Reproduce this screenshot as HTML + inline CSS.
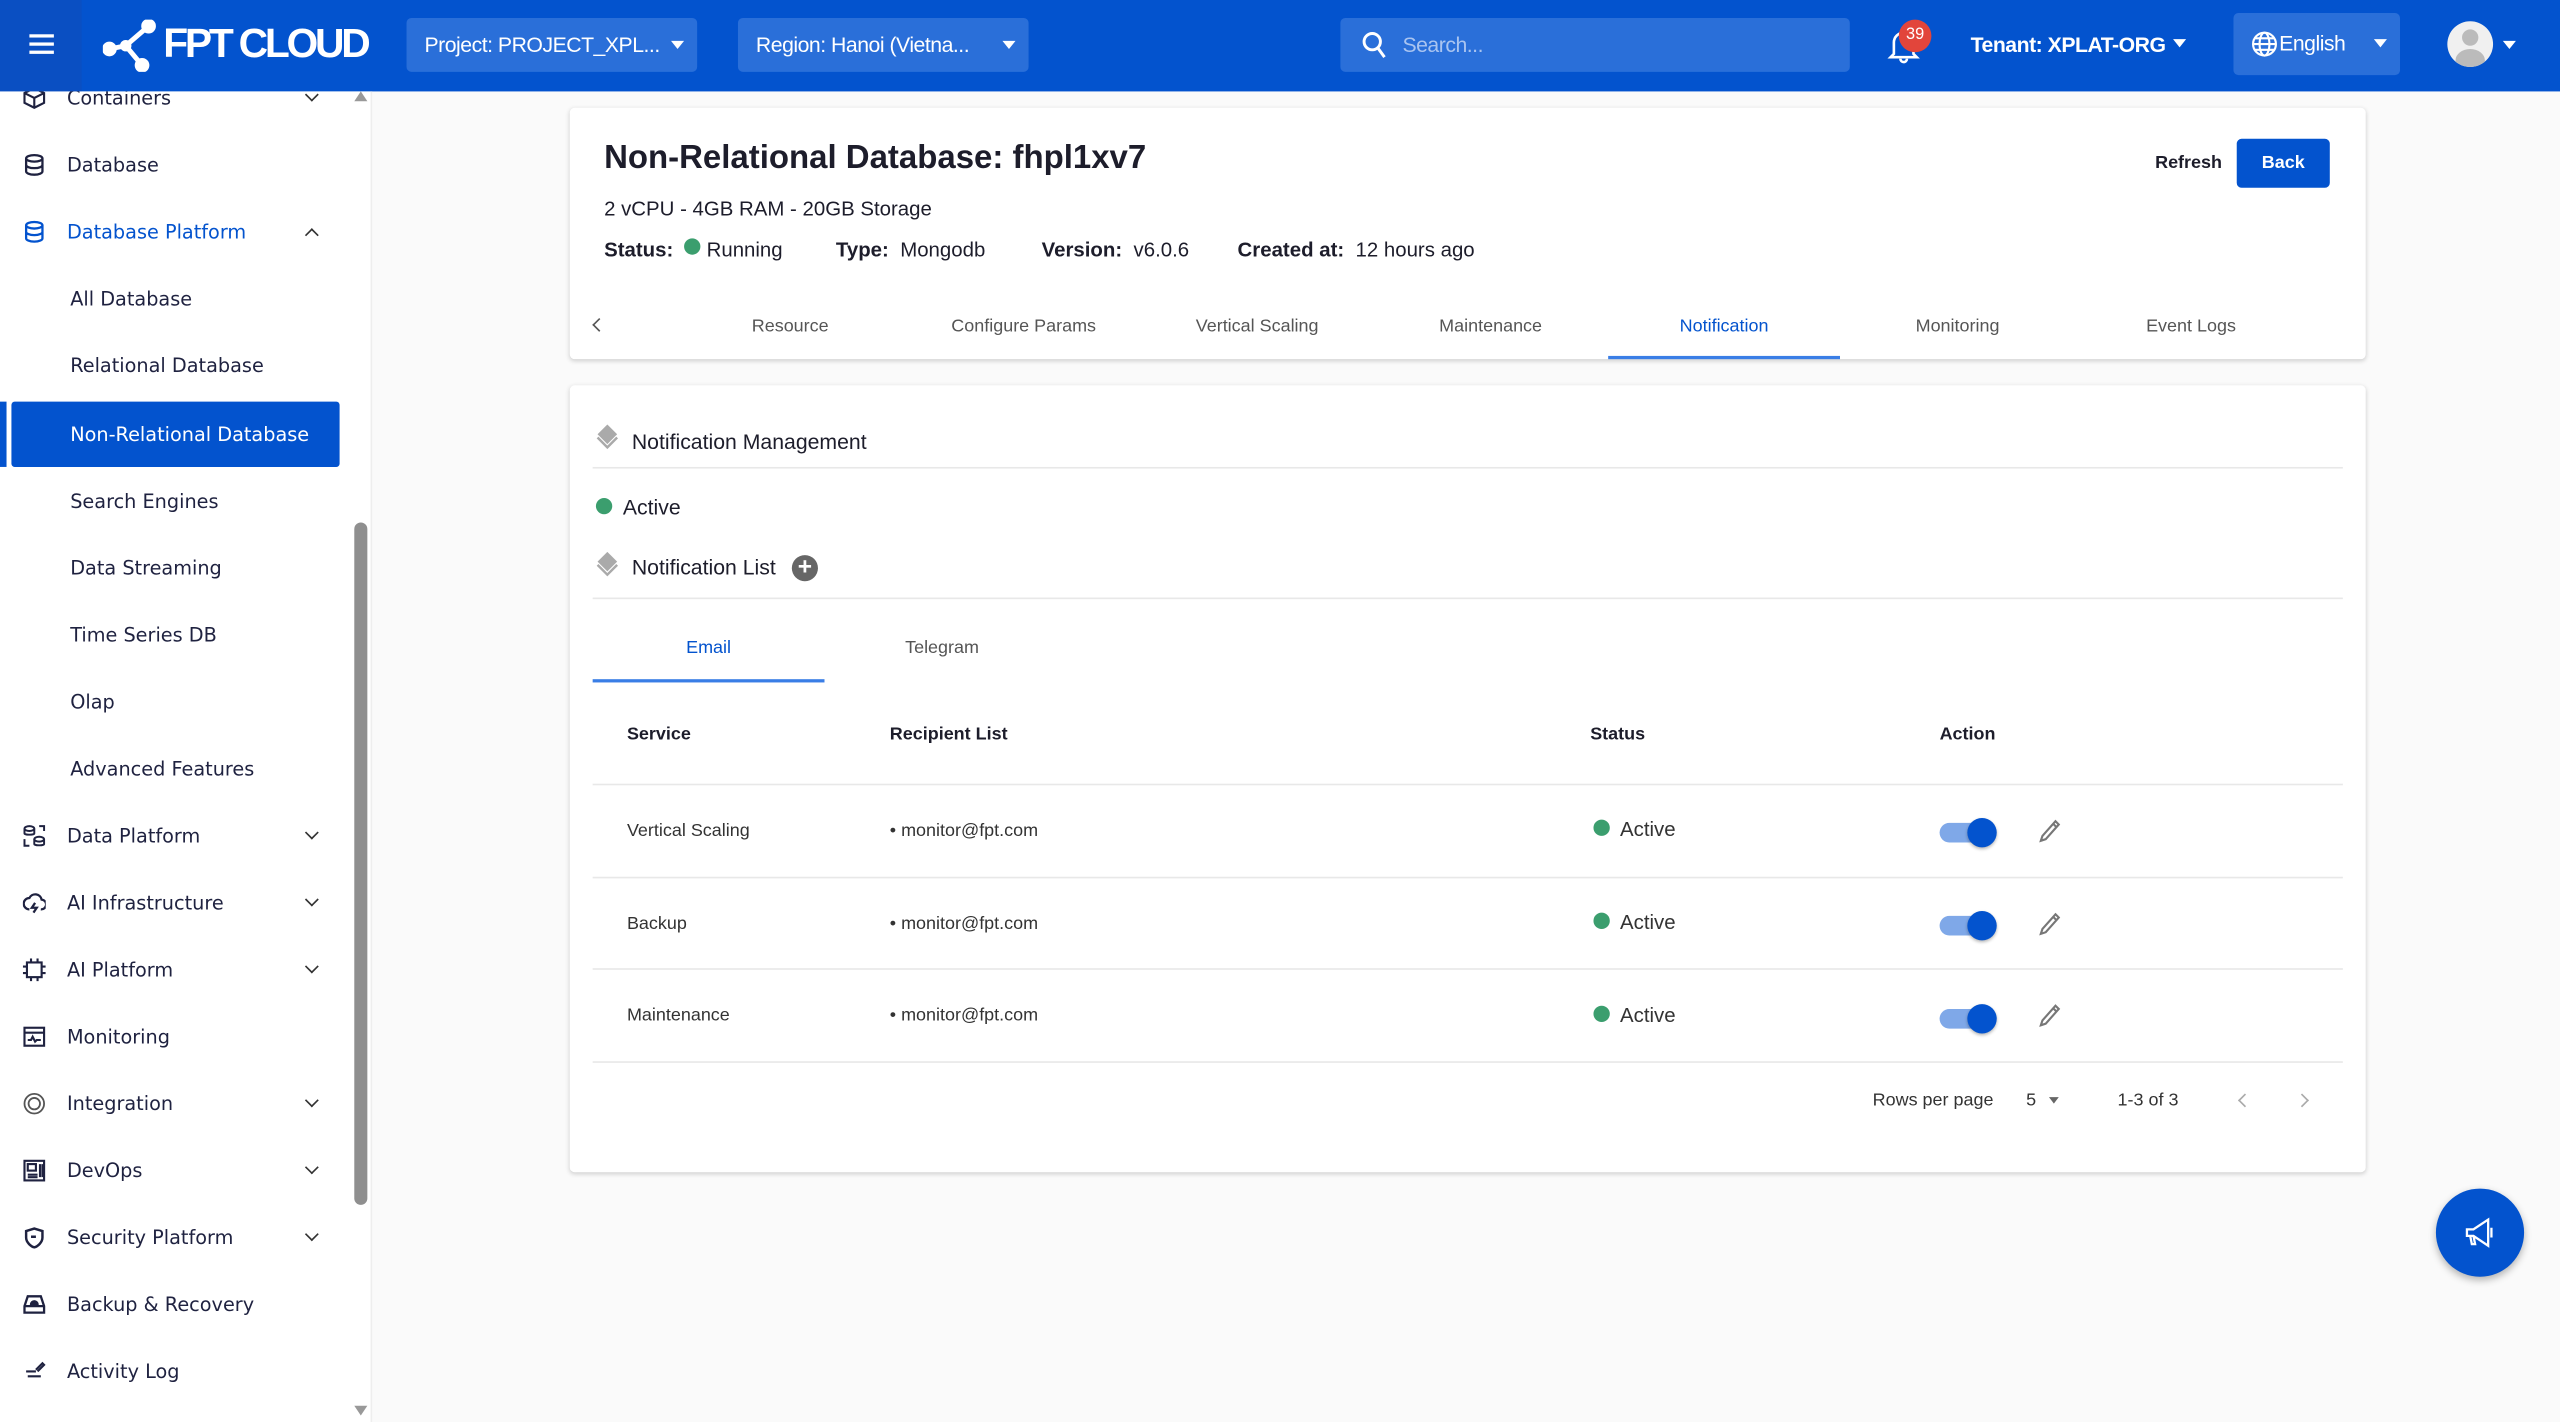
<!DOCTYPE html>
<html><head><meta charset="utf-8"><style>
*{box-sizing:border-box;margin:0;padding:0}
html,body{width:2560px;height:1422px;overflow:hidden;background:#fafafa}
#w{position:absolute;left:0;top:0;width:1568px;height:871px;transform:scale(1.632653);transform-origin:0 0;font-family:"Liberation Sans",sans-serif;color:#1d1d2b;background:#fafafa}
.a{position:absolute}
.hdr{left:0;top:0;width:1568px;height:56px;background:#0353ce}
.dd{background:#2a6fd9;border-radius:3px;color:#fff;font-size:13px;height:33px;line-height:33px;padding-left:11px;letter-spacing:-0.3px;white-space:nowrap}
.dd .tri{position:absolute;right:8px;top:14px;border-left:4px solid transparent;border-right:4px solid transparent;border-top:5px solid #fff}
.side{left:0;top:56px;width:228px;height:815px;background:#fff;border-right:1px solid #eee}
.si{position:absolute;left:0;width:215px;height:40px;font-family:"DejaVu Sans",sans-serif;font-size:11.8px;color:#1f2240;line-height:41px}
.si .t{position:absolute;left:41px}
.si .s{position:absolute;left:43px}
.si svg.ic{position:absolute;left:14px;top:13px}
.si .ch{position:absolute;left:188px;top:15px;width:6px;height:6px;border-right:1.5px solid #333;border-bottom:1.5px solid #333;transform:rotate(45deg)}
.card{background:#fff;box-shadow:0 1px 3px rgba(0,0,0,.18);border-radius:3px}
.tab{position:absolute;top:194px;font-size:11px;color:#555;width:142px;text-align:center}
.th{position:absolute;top:444px;font-size:11px;font-weight:bold;color:#1d1d2b}
.td{position:absolute;font-size:11px;color:#333}
.dot{display:inline-block;width:10px;height:10px;border-radius:50%;background:#3b9e6e}
.ln{position:absolute;left:363px;width:1072px;height:1px;background:#e8e8e8}
.tg{position:absolute;left:1188px;width:34px;height:12px;border-radius:6px;background:#7fa8e8}
.tg i{position:absolute;right:-1px;top:-3px;width:18px;height:18px;border-radius:50%;background:#0353ce;box-shadow:0 1px 2px rgba(0,0,0,.3)}
</style></head><body><div id="w">
<div class="a hdr">
 <div class="a" style="left:0;top:0;width:50px;height:56px;background:#0a4fc2"></div>
 <div class="a" style="left:18px;top:21px;width:15px;height:2px;background:#fff;box-shadow:0 5px 0 #fff,0 10px 0 #fff"></div>
 <svg class="a" style="left:63px;top:12px" width="36" height="32" viewBox="0 0 36 32"><g stroke="#fff" stroke-width="3" fill="#fff"><line x1="14" y1="16" x2="28" y2="4"/><line x1="14" y1="16" x2="24" y2="28"/><line x1="14" y1="16" x2="4" y2="18"/><circle cx="28" cy="4" r="3"/><circle cx="24" cy="28" r="3"/><circle cx="4" cy="18" r="3"/><circle cx="14" cy="16" r="2"/></g></svg>
 <div class="a" style="left:100px;top:13px;color:#fff;font-weight:bold;font-size:25px;letter-spacing:-2px">FPT CLOUD</div>
 <div class="a dd" style="left:249px;top:11px;width:178px">Project: PROJECT_XPL...<span class="tri"></span></div>
 <div class="a dd" style="left:452px;top:11px;width:178px">Region: Hanoi (Vietna...<span class="tri"></span></div>
 <div class="a dd" style="left:821px;top:11px;width:312px;padding-left:38px;color:#a9c4f0">Search...</div>
 <svg class="a" style="left:834px;top:19px" width="16" height="18" viewBox="0 0 16 18"><circle cx="6.5" cy="6.5" r="5" stroke="#fff" stroke-width="1.8" fill="none"/><line x1="10" y1="10.5" x2="14" y2="16" stroke="#fff" stroke-width="1.8"/></svg>
 <svg class="a" style="left:1156px;top:17px" width="20" height="22" viewBox="0 0 20 22"><path d="M4 16V9a6 6 0 0 1 12 0v7l2 2H2z" stroke="#fff" stroke-width="1.6" fill="none"/><path d="M8 19a2 2 0 0 0 4 0" stroke="#fff" stroke-width="1.6" fill="none"/></svg>
 <div class="a" style="left:1163px;top:12px;width:20px;height:20px;border-radius:50%;background:#e2453b;color:#fff;font-size:10px;text-align:center;line-height:20px">39</div>
 <div class="a" style="left:1207px;top:20px;color:#fff;font-size:13px;font-weight:bold;letter-spacing:-0.3px">Tenant: XPLAT-ORG</div>
 <div class="a" style="left:1331px;top:24px;border-left:4px solid transparent;border-right:4px solid transparent;border-top:5px solid #fff"></div>
 <div class="a dd" style="left:1368px;top:8px;width:102px;height:38px;line-height:38px;padding-left:28px">English<span class="tri" style="top:16px"></span></div>
 <svg class="a" style="left:1379px;top:19px" width="16" height="16" viewBox="0 0 16 16" fill="none" stroke="#fff" stroke-width="1.3"><circle cx="8" cy="8" r="7"/><ellipse cx="8" cy="8" rx="3" ry="7"/><line x1="1" y1="8" x2="15" y2="8"/><line x1="2" y1="4.5" x2="14" y2="4.5"/><line x1="2" y1="11.5" x2="14" y2="11.5"/></svg>
 <div class="a" style="left:1499px;top:13px;width:28px;height:28px;border-radius:50%;background:#f0f0f0;overflow:hidden"><div class="a" style="left:9px;top:5px;width:10px;height:10px;border-radius:50%;background:#bbb"></div><div class="a" style="left:5px;top:17px;width:18px;height:14px;border-radius:50%;background:#bbb"></div></div>
 <div class="a" style="left:1533px;top:25px;border-left:4px solid transparent;border-right:4px solid transparent;border-top:5px solid #fff"></div>
</div>

<div class="a side"></div>
<div class="a" style="left:0;top:56px;width:228px;height:815px;overflow:hidden">
 <div class="si" style="top:-16px"><svg class="ic" width="14" height="14" viewBox="0 0 14 14" fill="none" stroke="#1f2240" stroke-width="1.3"><path d="M7 1l6 3v6l-6 3-6-3V4z M1 4l6 3 6-3 M7 7v6"/></svg><span class="t">Containers</span><i class="ch"></i></div>
 <div class="si" style="top:25px"><svg class="ic" width="14" height="14" viewBox="0 0 14 14" fill="none" stroke="#1f2240" stroke-width="1.4"><ellipse cx="7" cy="3" rx="5" ry="2"/><path d="M2 3v8c0 1 2 2 5 2s5-1 5-2V3 M2 7c0 1 2 2 5 2s5-1 5-2"/></svg><span class="t">Database</span></div>
 <div class="si" style="top:66px;color:#0353ce"><svg class="ic" width="14" height="14" viewBox="0 0 14 14" fill="none" stroke="#0353ce" stroke-width="1.4"><ellipse cx="7" cy="3" rx="5" ry="2"/><path d="M2 3v8c0 1 2 2 5 2s5-1 5-2V3 M2 7c0 1 2 2 5 2s5-1 5-2"/></svg><span class="t">Database Platform</span><i class="ch" style="transform:rotate(225deg);top:19px"></i></div>
 <div class="si" style="top:107px"><span class="s">All Database</span></div>
 <div class="si" style="top:148px"><span class="s">Relational Database</span></div>
 <div class="a" style="left:0;top:190px;width:4px;height:40px;background:#0353ce"></div>
 <div class="si" style="top:190px;left:7px;width:201px;background:#0353ce;color:#fff;border-radius:2px"><span class="s" style="left:36px">Non-Relational Database</span></div>
 <div class="si" style="top:231px"><span class="s">Search Engines</span></div>
 <div class="si" style="top:272px"><span class="s">Data Streaming</span></div>
 <div class="si" style="top:313px"><span class="s">Time Series DB</span></div>
 <div class="si" style="top:354px"><span class="s">Olap</span></div>
 <div class="si" style="top:395px"><span class="s">Advanced Features</span></div>
 <div class="si" style="top:436px"><svg class="ic" width="14" height="14" viewBox="0 0 14 14" fill="none" stroke="#1f2240" stroke-width="1.2"><ellipse cx="4" cy="2.5" rx="3" ry="1.5"/><path d="M1 2.5v3c0 1 6 1 6 0v-3"/><ellipse cx="10" cy="9" rx="3" ry="1.5"/><path d="M7 9v3c0 1 6 1 6 0V9 M1 9v4h3 M10 1h3v3"/></svg><span class="t">Data Platform</span><i class="ch"></i></div>
 <div class="si" style="top:477px"><svg class="ic" width="14" height="14" viewBox="0 0 14 14" fill="none" stroke="#1f2240" stroke-width="1.4"><path d="M4 11a3.5 3.5 0 0 1 0-7 4 4 0 0 1 7.5 1A3 3 0 0 1 11 11 M7.5 7l-2 3h3l-2 3"/></svg><span class="t">AI Infrastructure</span><i class="ch"></i></div>
 <div class="si" style="top:518px"><svg class="ic" width="14" height="14" viewBox="0 0 14 14" fill="none" stroke="#1f2240" stroke-width="1.3"><rect x="2.5" y="2.5" width="9" height="9"/><path d="M0 5h2.5M0 9h2.5M11.5 5H14M11.5 9H14M5 0v2.5M9 0v2.5M5 11.5V14M9 11.5V14"/></svg><span class="t">AI Platform</span><i class="ch"></i></div>
 <div class="si" style="top:559px"><svg class="ic" width="14" height="14" viewBox="0 0 14 14" fill="none" stroke="#1f2240" stroke-width="1.3"><rect x="1" y="1.5" width="12" height="11"/><path d="M1 4.5h12 M3 9h2l1-2 1.5 3 1-1H11"/></svg><span class="t">Monitoring</span></div>
 <div class="si" style="top:600px"><svg class="ic" width="14" height="14" viewBox="0 0 14 14" fill="none" stroke="#555" stroke-width="1.1"><circle cx="7" cy="7" r="6"/><circle cx="7" cy="7" r="3.5"/></svg><span class="t">Integration</span><i class="ch"></i></div>
 <div class="si" style="top:641px"><svg class="ic" width="14" height="14" viewBox="0 0 14 14" fill="none" stroke="#1f2240" stroke-width="1.3"><rect x="1" y="1" width="12" height="12"/><rect x="3" y="3" width="5" height="4"/><path d="M3 9.5h6M3 11h6M10.5 3v8M12 3v8"/></svg><span class="t">DevOps</span><i class="ch"></i></div>
 <div class="si" style="top:682px"><svg class="ic" width="14" height="14" viewBox="0 0 14 14" fill="none" stroke="#1f2240" stroke-width="1.5"><path d="M2 3l5-1.5 5 1.5v4c0 3-3 5.5-5 6-2-.5-5-3-5-6z M5 6.5h3"/></svg><span class="t">Security Platform</span><i class="ch"></i></div>
 <div class="si" style="top:723px"><svg class="ic" width="14" height="14" viewBox="0 0 14 14" fill="none" stroke="#1f2240" stroke-width="1.4"><path d="M1 8l2-6h8l2 6v4H1z M1 8h12"/><path d="M5 7a2 2 0 0 1 4 0z" fill="#1f2240"/></svg><span class="t">Backup &amp; Recovery</span></div>
 <div class="si" style="top:764px"><svg class="ic" width="14" height="14" viewBox="0 0 14 14" fill="none" stroke="#1f2240" stroke-width="1.3"><path d="M2 7h6 M3 10h8 M8 6l4-4 1 1-4 4"/></svg><span class="t">Activity Log</span></div>
 <div class="a" style="left:217px;top:264px;width:8px;height:418px;border-radius:4px;background:#8f8f8f"></div>
 <div class="a" style="left:217px;top:0;border-left:4px solid transparent;border-right:4px solid transparent;border-bottom:6px solid #999"></div>
 <div class="a" style="left:217px;top:805px;border-left:4px solid transparent;border-right:4px solid transparent;border-top:6px solid #999"></div>
</div>

<div class="a card" style="left:349px;top:66px;width:1100px;height:154px"></div>
<div class="a" style="left:370px;top:86px;font-size:20.2px;font-weight:bold">Non-Relational Database: fhpl1xv7</div>
<div class="a" style="left:370px;top:121px;font-size:12.5px">2 vCPU - 4GB RAM - 20GB Storage</div>
<div class="a" style="left:370px;top:146px;font-size:12.5px"><b>Status:</b> &nbsp;<span class="dot" style="vertical-align:1px"></span> Running</div>
<div class="a" style="left:512px;top:146px;font-size:12.5px"><b>Type:</b>&nbsp; Mongodb</div>
<div class="a" style="left:638px;top:146px;font-size:12.5px"><b>Version:</b>&nbsp; v6.0.6</div>
<div class="a" style="left:758px;top:146px;font-size:12.5px"><b>Created at:</b>&nbsp; 12 hours ago</div>
<div class="a" style="left:1320px;top:94px;font-size:11px;font-weight:bold">Refresh</div>
<div class="a" style="left:1370px;top:85px;width:57px;height:30px;border-radius:3px;background:#0353ce;color:#fff;font-size:11px;font-weight:bold;text-align:center;line-height:30px">Back</div>
<div class="a" style="left:364px;top:196px;width:6px;height:6px;border-left:1.5px solid #555;border-bottom:1.5px solid #555;transform:rotate(45deg)"></div>
<div class="tab" style="left:413px">Resource</div>
<div class="tab" style="left:556px">Configure Params</div>
<div class="tab" style="left:699px">Vertical Scaling</div>
<div class="tab" style="left:842px">Maintenance</div>
<div class="tab" style="left:985px;color:#0353ce">Notification</div>
<div class="tab" style="left:1128px">Monitoring</div>
<div class="tab" style="left:1271px">Event Logs</div>
<div class="a" style="left:985px;top:218px;width:142px;height:2px;background:#3a7ee6"></div>

<div class="a card" style="left:349px;top:236px;width:1100px;height:482px"></div>
<svg class="a" style="left:365px;top:260px" width="14" height="16" viewBox="0 0 14 16"><path d="M7 0l6 6-6 6-6-6z" fill="#aaa"/><path d="M1 8l6 6 6-6" stroke="#aaa" stroke-width="1.5" fill="none"/></svg>
<div class="a" style="left:387px;top:263px;font-size:13px">Notification Management</div>
<div class="ln" style="top:286px"></div>
<div class="a" style="left:365px;top:303px;font-size:13px"><span class="dot" style="vertical-align:0"></span>&nbsp; Active</div>
<svg class="a" style="left:365px;top:338px" width="14" height="16" viewBox="0 0 14 16"><path d="M7 0l6 6-6 6-6-6z" fill="#aaa"/><path d="M1 8l6 6 6-6" stroke="#aaa" stroke-width="1.5" fill="none"/></svg>
<div class="a" style="left:387px;top:340px;font-size:13px">Notification List</div>
<div class="a" style="left:485px;top:340px;width:16px;height:16px;border-radius:50%;background:#666;color:#fff;font-size:15px;line-height:16px;text-align:center;font-weight:bold">+</div>
<div class="ln" style="top:366px"></div>
<div class="a" style="left:363px;top:391px;width:142px;text-align:center;font-size:11px;color:#0353ce">Email</div>
<div class="a" style="left:506px;top:391px;width:142px;text-align:center;font-size:11px;color:#555">Telegram</div>
<div class="a" style="left:363px;top:416px;width:142px;height:2px;background:#3a7ee6"></div>
<div class="th" style="left:384px">Service</div>
<div class="th" style="left:545px">Recipient List</div>
<div class="th" style="left:974px">Status</div>
<div class="th" style="left:1188px">Action</div>
<div class="ln" style="top:480px"></div>

<div class="td" style="left:384px;top:503px">Vertical Scaling</div>
<div class="td" style="left:545px;top:503px">• monitor@fpt.com</div>
<div class="td" style="left:976px;top:501px;font-size:12.5px"><span class="dot"></span>&nbsp; Active</div>
<div class="tg" style="top:504px"><i></i></div>
<div class="ln" style="top:537px"></div>
<div class="td" style="left:384px;top:560px">Backup</div>
<div class="td" style="left:545px;top:560px">• monitor@fpt.com</div>
<div class="td" style="left:976px;top:558px;font-size:12.5px"><span class="dot"></span>&nbsp; Active</div>
<div class="tg" style="top:561px"><i></i></div>
<div class="ln" style="top:593px"></div>
<div class="td" style="left:384px;top:616px">Maintenance</div>
<div class="td" style="left:545px;top:616px">• monitor@fpt.com</div>
<div class="td" style="left:976px;top:615px;font-size:12.5px"><span class="dot"></span>&nbsp; Active</div>
<div class="tg" style="top:618px"><i></i></div>
<div class="ln" style="top:650px"></div>
<svg class="a" style="left:1249px;top:501px" width="14" height="16" viewBox="0 0 14 16"><path d="M10 2l2 2-8 9-3 1 1-3z M8.5 3.5l2 2" stroke="#777" stroke-width="1.3" fill="none"/></svg>
<svg class="a" style="left:1249px;top:558px" width="14" height="16" viewBox="0 0 14 16"><path d="M10 2l2 2-8 9-3 1 1-3z M8.5 3.5l2 2" stroke="#777" stroke-width="1.3" fill="none"/></svg>
<svg class="a" style="left:1249px;top:614px" width="14" height="16" viewBox="0 0 14 16"><path d="M10 2l2 2-8 9-3 1 1-3z M8.5 3.5l2 2" stroke="#777" stroke-width="1.3" fill="none"/></svg>

<div class="td" style="left:1147px;top:668px">Rows per page</div>
<div class="td" style="left:1241px;top:668px">5</div>
<div class="a" style="left:1255px;top:672px;border-left:3.5px solid transparent;border-right:3.5px solid transparent;border-top:4.5px solid #666"></div>
<div class="td" style="left:1297px;top:668px">1-3 of 3</div>
<div class="a" style="left:1372px;top:671px;width:6px;height:6px;border-left:1.3px solid #aaa;border-bottom:1.3px solid #aaa;transform:rotate(45deg)"></div>
<div class="a" style="left:1407px;top:671px;width:6px;height:6px;border-right:1.3px solid #aaa;border-top:1.3px solid #aaa;transform:rotate(45deg)"></div>

<div class="a" style="left:1492px;top:728px;width:54px;height:54px;border-radius:50%;background:#0353ce;box-shadow:0 2px 5px rgba(0,0,0,.3)"></div>
<svg class="a" style="left:1508px;top:744px" width="22" height="22" viewBox="0 0 22 22" fill="none" stroke="#fff" stroke-width="1.4"><path d="M3 9h4l9-6v16l-9-6H3z M5 13l1 5h2l-1-5 M18 8v6"/></svg>
</div></body></html>
